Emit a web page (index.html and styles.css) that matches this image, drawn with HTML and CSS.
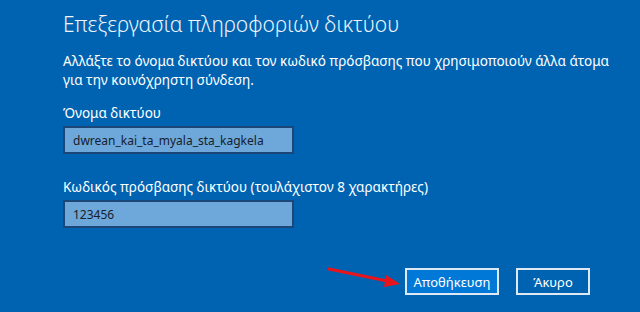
FILE: index.html
```html
<html>
  <head>
    <link rel="stylesheet" href="styles.css">
    <title>Επεξεργασία πληροφοριών δικτύου</title>
  </head>
<body>
  <div class="dialog">
    <h1 class="title">Επεξεργασία πληροφοριών δικτύου</h1>

    <p class="intro">Αλλάξτε το όνομα δικτύου και τον κωδικό πρόσβασης που χρησιμοποιούν άλλα άτομα<br>για την κοινόχρηστη σύνδεση.</p>

    <form class="fields">
      <label for="ssid">Όνομα δικτύου</label>
      <input type="text" id="ssid" class="box" value="dwrean_kai_ta_myala_sta_kagkela">

      <label for="pass" class="second">Κωδικός πρόσβασης δικτύου (τουλάχιστον 8 χαρακτήρες)</label>
      <input type="text" id="pass" class="box" value="123456">
    </form>

    <div class="actions">
      <button class="btn primary">Αποθήκευση</button>
      <button class="btn">Άκυρο</button>
    </div>
  </div>

  <!-- red arrow pointing at the save button -->
  <svg class="arrow" width="90" height="30" viewBox="0 0 90 30">
    <line x1="3" y1="3" x2="66" y2="16" stroke="#e8141b" stroke-width="3" stroke-linecap="round"/>
    <polygon points="60,9 74,18 58,21" fill="#e8141b"/>
  </svg>
</body>
</html>
```

FILE: styles.css
```css
body {
  margin: 0;
  background: #0063b1;
  font-family: "Noto Sans", "Open Sans", sans-serif;
  color: #fff;
  width: 640px;
  height: 312px;
  overflow: hidden;
  position: relative;
}

.dialog {
  padding: 10px 0 0 63px;
}

.title {
  margin: 0;
  font-size: 21px;
  font-weight: 300;
  line-height: 28px;
  color: #eef4fa;
}

.intro {
  margin: 14px 0 0;
  font-size: 13.5px;
  line-height: 19px;
}

.fields {
  margin: 14px 0 0;
}

label {
  display: block;
  font-size: 13.5px;
  line-height: 19px;
}

label.second {
  margin-top: 24px;
}

.box {
  display: block;
  box-sizing: border-box;
  width: 231px;
  height: 28px;
  margin-top: 3px;
  padding: 0 8px;
  background: #6ea8da;
  border: 2px solid #1a4777;
  font-family: "Noto Sans", "Open Sans", sans-serif;
  font-size: 12px;
  color: #16202c;
  outline: none;
}

.actions {
  display: flex;
  gap: 17px;
  margin: 40px 0 0 342px;
}

.btn {
  box-sizing: border-box;
  height: 27px;
  width: 74px;
  background: #0063b1;
  border: 2px solid #dfe9f3;
  color: #fff;
  font-family: "Noto Sans", "Open Sans", sans-serif;
  font-size: 13px;
  padding: 0;
}

.btn.primary {
  width: 94px;
  background: #0078d7;
}

.arrow {
  position: absolute;
  left: 326px;
  top: 266px;
}
```
